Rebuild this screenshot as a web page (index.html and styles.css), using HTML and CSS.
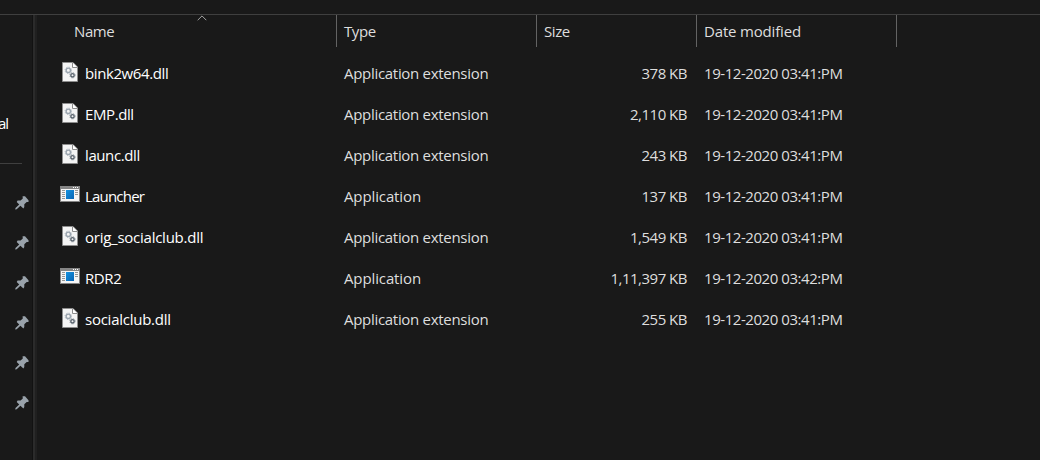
FILE: index.html
```html
<!DOCTYPE html>
<html lang="en">
<head>
<meta charset="utf-8">
<title>Files</title>
<link rel="stylesheet" href="styles.css">
</head>
<body>
<svg width="0" height="0" class="defs">
  <symbol id="dll" viewBox="0 0 16 20">
    <path d="M.5.5H11L15.5 5V19.5H.5Z" fill="#f4f4f4" stroke="#8c8c8c"/>
    <path d="M10.5.5V5.5H15.5" fill="#fff" stroke="#8c8c8c"/>
    <circle cx="6.3" cy="8.3" r="2.2" fill="none" stroke="#9aa4ae" stroke-width="1.4"/>
    <circle cx="6.3" cy="8.3" r="3.2" fill="none" stroke="#a9b2bb" stroke-width="1" stroke-dasharray="1.25 1.26"/>
    <circle cx="10.5" cy="13.3" r="1.7" fill="none" stroke="#59636d" stroke-width="1.4"/>
    <circle cx="10.5" cy="13.3" r="2.6" fill="none" stroke="#78828b" stroke-width="1" stroke-dasharray="1.02 1.02"/>
  </symbol>
  <symbol id="exe" viewBox="0 0 20 16">
    <path d="M0 0H20V16H0Z" fill="#858585"/>
    <path d="M1 3H19V15H1Z" fill="#f5f5f5"/>
    <path d="M13 1h1v1h-1zM15 1h1v1h-1zM17 1h1v1h-1z" fill="#fff"/>
    <path d="M2 4.5h3M2 6.5h3M2 8.5h3M2 10.5h3M2 12.5h3M15 4.5h3M15 6.5h3M15 8.5h3" stroke="#969696"/>
    <path d="M6 4H14V13H6Z" fill="url(#blue)"/>
  </symbol>
  <linearGradient id="blue" x2="1" y2="1"><stop stop-color="#1593e0"/><stop offset="1" stop-color="#0864b4"/></linearGradient>
  <symbol id="pin" viewBox="0 0 14 14">
    <path d="M7.6.3H10L13.5 4.2V6H11.7L9.3 8.3V11L8.4 12.4 5.4 9.7 1.7 13.3.2 13.5.5 12 4.2 8.5 1.7 6.1 2.6 4.6H5.6L7.8 2.4Z" fill="#99a2aa"/>
  </symbol>
</svg>
<div class="window">
  <div class="toolbar"></div>
  <div class="main">
    <nav class="sidebar">
      <div class="label">al</div>
      <div class="rule"></div>
      <div class="pins">
        <svg><use href="#pin"/></svg><svg><use href="#pin"/></svg><svg><use href="#pin"/></svg>
        <svg><use href="#pin"/></svg><svg><use href="#pin"/></svg><svg><use href="#pin"/></svg>
      </div>
    </nav>
    <section class="list">
      <header class="row head">
        <div class="cell name">Name
          <svg class="sort" viewBox="0 0 10 6"><path d="M.7 5.2 5 .9 9.3 5.2" fill="none" stroke="#a5a5a5"/></svg></div>
        <div class="cell">Type</div>
        <div class="cell">Size</div>
        <div class="cell modified">Date modified</div>
      </header>
      <div class="row"><div class="cell name"><svg class="dll"><use href="#dll"/></svg>bink2w64.dll</div><div class="cell type">Application extension</div><div class="cell size">378 KB</div><div class="cell date">19-12-2020 03:41:PM</div></div>
      <div class="row"><div class="cell name"><svg class="dll"><use href="#dll"/></svg>EMP.dll</div><div class="cell type">Application extension</div><div class="cell size">2,110 KB</div><div class="cell date">19-12-2020 03:41:PM</div></div>
      <div class="row"><div class="cell name"><svg class="dll"><use href="#dll"/></svg>launc.dll</div><div class="cell type">Application extension</div><div class="cell size">243 KB</div><div class="cell date">19-12-2020 03:41:PM</div></div>
      <div class="row"><div class="cell name tight"><svg class="exe"><use href="#exe"/></svg>Launcher</div><div class="cell type short">Application</div><div class="cell size">137 KB</div><div class="cell date">19-12-2020 03:41:PM</div></div>
      <div class="row"><div class="cell name wide"><svg class="dll"><use href="#dll"/></svg>orig_socialclub.dll</div><div class="cell type">Application extension</div><div class="cell size">1,549 KB</div><div class="cell date">19-12-2020 03:41:PM</div></div>
      <div class="row"><div class="cell name"><svg class="exe"><use href="#exe"/></svg>RDR2</div><div class="cell type short">Application</div><div class="cell size">1,11,397 KB</div><div class="cell date">19-12-2020 03:42:PM</div></div>
      <div class="row"><div class="cell name wide"><svg class="dll"><use href="#dll"/></svg>socialclub.dll</div><div class="cell type">Application extension</div><div class="cell size">255 KB</div><div class="cell date">19-12-2020 03:41:PM</div></div>
    </section>
  </div>
</div>
</body>
</html>
```
FILE: styles.css
```css
* { box-sizing: border-box; }
body { margin: 0; background: #191919; color: #dedede; font: 15px/20px "Open Sans", "Noto Sans", sans-serif; }
.defs { position: absolute; }
.window { height: 460px; display: flex; flex-direction: column; overflow: hidden; }
.toolbar { height: 15px; flex: none; border-bottom: 1px solid #3f3f3f; }
.main { flex: 1; display: flex; }
.sidebar { width: 37px; flex: none; border-right: 2px solid #202020; box-shadow: inset -2px 0 #2b2b2b, inset -3px 0 #121212; color: #fff; }
.label { padding-top: 98px; margin-left: -2px; letter-spacing: -1.2px; }
.rule { width: 22px; height: 1px; margin-top: 30px; background: #3f3f3f; }
.pins { display: flex; flex-direction: column; gap: 26px; padding: 32px 0 0 15px; }
.pins svg { width: 14px; height: 14px; flex: none; }
.row { display: grid; grid-template-columns: 300px 200px 160px 200px; height: 41px; align-items: center; }
.head { height: 32px; margin-bottom: 5px; }
.cell { padding-left: 7px; white-space: nowrap; letter-spacing: -.4px; }
.head .cell { height: 32px; padding-top: 6px; border-right: 1px solid #636363; position: relative; }
.head .name { padding-left: 37px; color: #dedede; }
.head .modified { letter-spacing: -.17px; }
.sort { position: absolute; left: 160px; top: 0; width: 10px; height: 6px; }
.name { display: flex; padding-left: 22px; color: #fff; }
.name > svg { flex: none; }
.dll { width: 16px; height: 20px; margin: -1px 7px 1px 3px; }
.exe { width: 20px; height: 16px; margin: 0 5px 0 1px; }
.type { letter-spacing: -.3px; }
.short { letter-spacing: -.12px; }
.tight { letter-spacing: -.8px; }
.wide { letter-spacing: -.25px; }
.size { text-align: right; padding-right: 10px; letter-spacing: -.5px; }
.date { letter-spacing: -.44px; }
```
